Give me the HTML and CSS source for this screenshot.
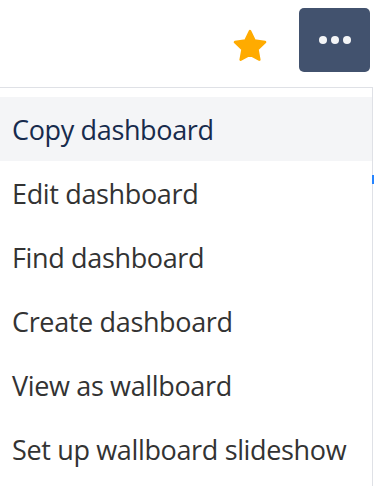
FILE: index.html
```html
<!DOCTYPE html>
<html lang="en">
<head>
<meta charset="UTF-8">
<meta name="viewport" content="width=device-width, initial-scale=1.0">
<title>Dashboard menu</title>
<link rel="stylesheet" href="styles.css">
</head>
<body>

<div class="topbar">

    <span class="star">
        <svg width="40" height="38" viewBox="0 0 24 24">
            <path d="M12 2.6l2.9 6 6.6.9-4.8 4.6 1.2 6.5L12 17.5l-5.9 3.1 1.2-6.5-4.8-4.6 6.6-.9z"
                fill="#ffab00" stroke="#ffab00" stroke-width="1.6" stroke-linejoin="round"/>
        </svg>
    </span>

    <button class="more">
        <i></i><i></i><i></i>
    </button>

</div>

<!-- MENU -->

<div class="menu">

    <div class="item active">Copy dashboard</div>
    <div class="item">Edit dashboard</div>
    <div class="item">Find dashboard</div>
    <div class="item">Create dashboard</div>
    <div class="item">View as wallboard</div>
    <div class="item">Set up wallboard slideshow</div>

    <span class="edge"></span>

</div>

</body>
</html>
```

FILE: styles.css
```css
*{
    margin:0;
    padding:0;
    box-sizing:border-box;
    font-family:"Open Sans","Noto Sans",sans-serif;
}

body{
    width:374px;
    height:486px;
    overflow:hidden;
    background:white;
}

/* TOP BAR */

.topbar{
    height:87px;
    display:flex;
    justify-content:flex-end;
    align-items:flex-start;
    padding:8px 4px 0 0;
}

.star{
    display:flex;
    width:40px;
    height:38px;
    margin:19px 29px 0 0;
}

.more{
    width:71px;
    height:64px;
    border:none;
    border-radius:5px;
    background:#42526e;
    display:flex;
    justify-content:center;
    align-items:center;
    gap:4px;
}

.more i{
    width:8px;
    height:8px;
    border-radius:50%;
    background:#f4f5f7;
}

/* MENU */

.menu{
    position:relative;
    width:373px;
    height:400px;
    border-top:1px solid #dfe1e6;
    border-right:1px solid #dfe1e6;
    padding-top:9px;
}

.item{
    height:64px;
    line-height:65px;
    padding:0 12px;
    font-size:27px;
    letter-spacing:-0.35px;
    color:#333;
    white-space:nowrap;
}

.item.active{
    background:#f4f5f7;
    color:#172b4d;
}

.edge{
    position:absolute;
    top:87px;
    right:-2px;
    width:2px;
    height:9px;
    background:#2684ff;
}
```
